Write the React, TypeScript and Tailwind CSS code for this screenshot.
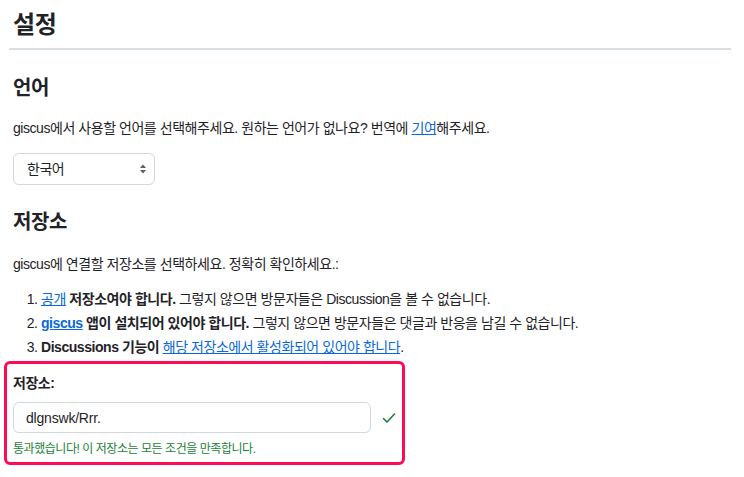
import React from 'react';

const FONT = "font-['Liberation_Sans','Noto_Sans_CJK_KR',sans-serif]";

const SortIcon: React.FC = () => (
  <svg width="8" height="12" viewBox="0 0 8 12" className="text-[#57606a]">
    <path d="M4 1.5 L7 5 H1 Z" fill="currentColor" />
    <path d="M4 10.5 L7 7 H1 Z" fill="currentColor" />
  </svg>
);

const Check: React.FC = () => (
  <svg width="14" height="12" viewBox="0 0 14 12" fill="none">
    <path d="M1.5 6.5 L5 10 L12.5 2" stroke="#1a7f37" strokeWidth="1.6" strokeLinecap="round" strokeLinejoin="round" />
  </svg>
);

/**
 * giscus settings section (language + repository)
 */
const App: React.FC = () => {
  const [repo, setRepo] = React.useState('dlgnswk/Rrr.');

  return (
    <div className={`min-h-screen bg-white text-[#1f2328] ${FONT}`}>
      <div className="pl-[13px] pr-[13px] pt-[10px] tracking-[-0.45px]">
        {/* Header */}
        <h1 className="text-[24px] leading-[30px] font-semibold pb-[8px] border-b-2 border-[#d8dee4] -ml-[4px] pl-[4px]">
          설정
        </h1>

        {/* Language */}
        <h2 className="mt-[23px] text-[20px] leading-[30px] font-semibold">언어</h2>
        <p className="mt-[14px] text-[14px] leading-[22px]">
          giscus에서 사용할 언어를 선택해주세요. 원하는 언어가 없나요? 번역에{' '}
          <a href="#" className="text-[#0969da] underline">기여</a>해주세요.
        </p>
        <div className="mt-[14px] w-[142px] h-[32px] rounded-md border border-[#d0d7de] flex items-center justify-between pl-[13px] pr-[7px] text-[14px]">
          <span>한국어</span>
          <SortIcon />
        </div>

        {/* Repository */}
        <h2 className="mt-[22px] text-[20px] leading-[30px] font-semibold">저장소</h2>
        <p className="mt-[16px] text-[14px] leading-[22px]">
          giscus에 연결할 저장소를 선택하세요. 정확히 확인하세요.:
        </p>
        <ol className="mt-[12px] list-decimal pl-[28px] text-[14px] leading-[24px]">
          <li>
            <a href="#" className="text-[#0969da] underline">공개</a>{' '}
            <strong className="font-semibold">저장소여야 합니다.</strong> 그렇지 않으면 방문자들은 Discussion을 볼 수 없습니다.
          </li>
          <li>
            <a href="#" className="text-[#0969da] underline font-semibold">giscus</a>{' '}
            <strong className="font-semibold">앱이 설치되어 있어야 합니다.</strong> 그렇지 않으면 방문자들은 댓글과 반응을 남길 수 없습니다.
          </li>
          <li>
            <strong className="font-semibold">Discussions 기능이</strong>{' '}
            <a href="#" className="text-[#0969da] underline">해당 저장소에서 활성화되어 있어야 합니다</a>.
          </li>
        </ol>

        {/* Highlighted repository input */}
        <div className="mt-[2px] -ml-[9px] w-[401px] border-[3px] border-[#ff0a55] rounded-md pl-[6px] pr-[6px] pt-[9px] pb-[4px]">
          <label className="block text-[14px] leading-[20px] font-semibold">저장소:</label>
          <div className="mt-[9px] flex items-center">
            <input
              value={repo}
              onChange={(e) => setRepo(e.target.value)}
              className={`w-[358px] h-[31px] rounded-md border border-[#d0d7de] px-[12px] text-[14px] tracking-[-0.2px] outline-none ${FONT}`}
            />
            <span className="ml-[11px] flex items-center">
              <Check />
            </span>
          </div>
          <p className="mt-[7px] text-[12px] leading-[18px] text-[#1a7f37]">
            통과했습니다! 이 저장소는 모든 조건을 만족합니다.
          </p>
        </div>
      </div>
    </div>
  );
};

export default App;
